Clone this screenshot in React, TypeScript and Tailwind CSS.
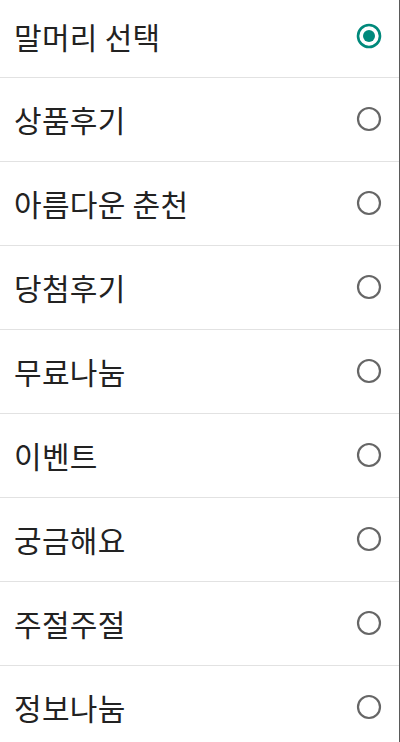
import { useState } from "react";

const ITEMS = [
  "말머리 선택",
  "상품후기",
  "아름다운 춘천",
  "당첨후기",
  "무료나눔",
  "이벤트",
  "궁금해요",
  "주절주절",
  "정보나눔",
];

function Radio({ checked }: { checked: boolean }) {
  return (
    <svg width="28" height="28" viewBox="0 0 28 28">
      <circle
        cx="14"
        cy="14"
        r="11"
        fill="none"
        stroke={checked ? "#00897b" : "#666666"}
        strokeWidth={checked ? 2.6 : 2.2}
      />
      {checked && <circle cx="14" cy="14" r="6" fill="#00897b" />}
    </svg>
  );
}

export default function App() {
  const [selected, setSelected] = useState(0);

  return (
    <div className="h-[742px] w-[400px] overflow-hidden border-r border-[#5a5a5a] bg-white font-['Noto_Sans_CJK_KR','Noto_Sans',sans-serif]">
      {ITEMS.map((label, i) => (
        <button
          key={label}
          type="button"
          onClick={() => setSelected(i)}
          className={
            "flex w-full items-center justify-between border-b border-[#e2e2e2] pl-[14px] pr-[16px] text-left " +
            (i === 0 ? "h-[78px] pb-[5px]" : "h-[84px] pb-[2px]")
          }
        >
          <span className="text-[30px] leading-none tracking-[0.3px] text-[#222222]">{label}</span>
          <Radio checked={selected === i} />
        </button>
      ))}
    </div>
  );
}
